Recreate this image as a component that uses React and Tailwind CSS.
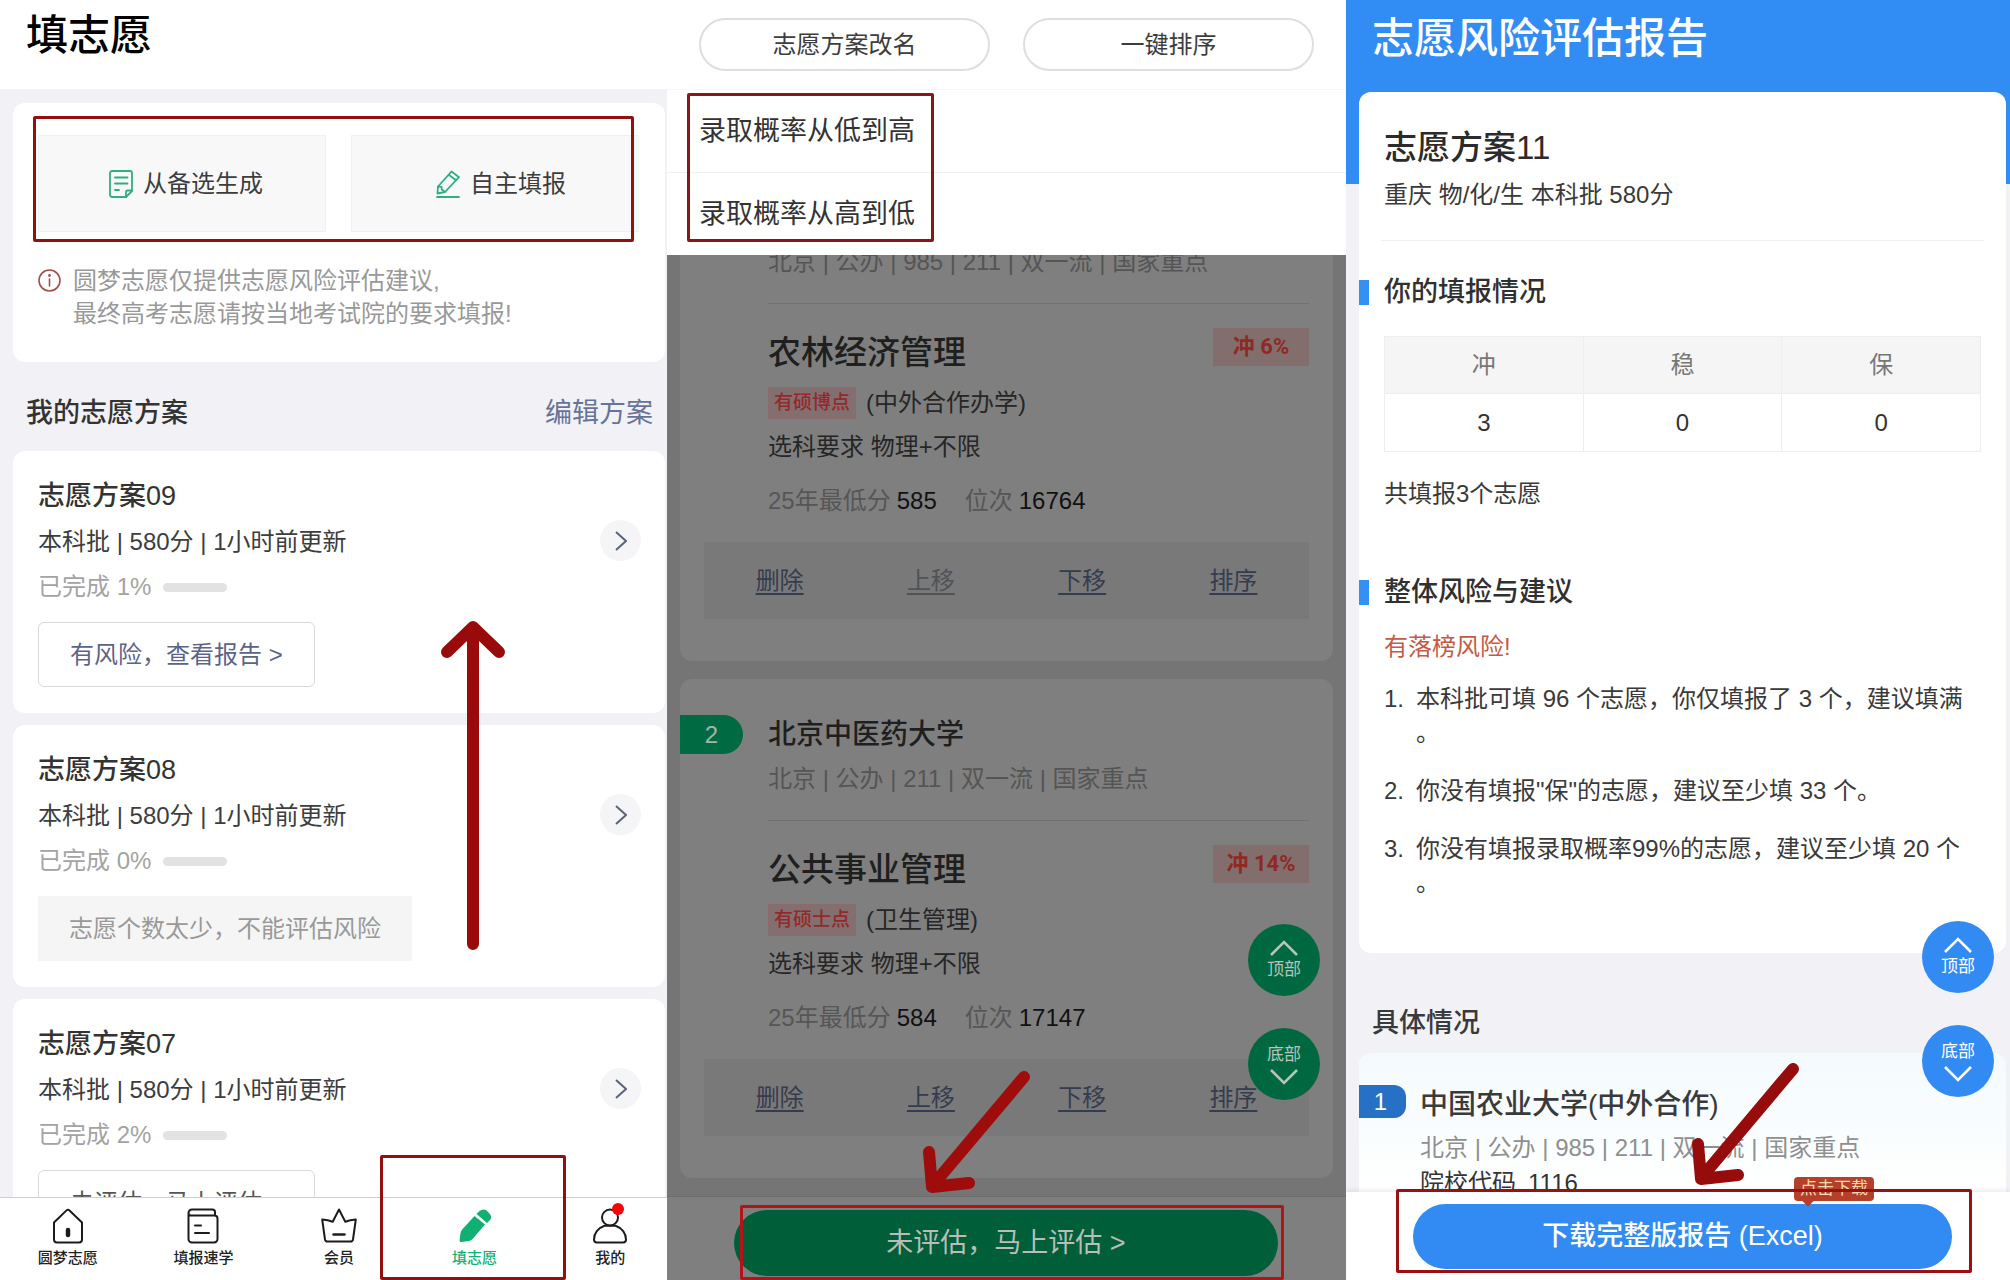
import React from "react";

const FONT = "font-['Liberation_Sans','Noto_Sans_CJK_SC',sans-serif]";

/* ---------- icons ---------- */

function DocIcon() {
  return (
    <svg aria-hidden="true" className="h-7 w-6" viewBox="0 0 24 28" fill="none" stroke="#2fae80" strokeWidth="1.8" strokeLinecap="round" strokeLinejoin="round">
      <path d="M17 27H3a2 2 0 0 1-2-2V3a2 2 0 0 1 2-2h18a2 2 0 0 1 2 2v18z" />
      <path d="M23 20.5h-4.5a1.5 1.5 0 0 0-1.5 1.5v5M6 7.500h12.500M6 13.500h12.500M6 20h4" />
    </svg>
  );
}

function WriteIcon() {
  return (
    <svg aria-hidden="true" className="h-7 w-6" viewBox="0 0 24 28" fill="none" stroke="#2fae80" strokeWidth="1.8" strokeLinecap="round" strokeLinejoin="round">
      <path d="M15.500 1.500 23 7.200 9 22 1.500 23.500 2 16.500z" />
      <path d="M12.700 4.800 20.200 10.300M2 16.500 5.500 16.800 5.800 19.500 9 22M1 27h22" />
    </svg>
  );
}

function InfoIcon() {
  return (
    <svg aria-hidden="true" className="mt-[5px] size-[23px] shrink-0" viewBox="0 0 23 23" fill="none" stroke="#a0504c" strokeWidth="1.6" strokeLinecap="round">
      <circle cx="11.500" cy="11.500" r="10.500" />
      <path d="M11.500 10v7" />
      <circle cx="11.500" cy="6.500" r="0.600" fill="#a0504c" />
    </svg>
  );
}

function Chevron({ d, className }) {
  return (
    <svg aria-hidden="true" className={className} viewBox="0 0 28 16" fill="none" stroke="currentColor" strokeWidth="2.600">
      <path d={d} />
    </svg>
  );
}

function HomeIcon() {
  return (
    <svg aria-hidden="true" className="h-9 w-9" viewBox="0 0 36 36" fill="none" stroke="#1c1c1c" strokeWidth="2" strokeLinejoin="round">
      <path d="M4 14.500 16.500 2.400a2.200 2.200 0 0 1 3 0L32 14.500V31.500a3 3 0 0 1-3 3H7a3 3 0 0 1-3-3z" />
      <path d="M18 22v5" strokeWidth="4.500" strokeLinecap="round" />
    </svg>
  );
}

function BookIcon() {
  return (
    <svg aria-hidden="true" className="h-9 w-9" viewBox="0 0 36 36" fill="none" stroke="#1c1c1c" strokeWidth="2" strokeLinecap="round" strokeLinejoin="round">
      <path d="M3.500 5a3.500 3.500 0 0 1 3.500-3.500h20.500a2.500 2.500 0 0 1 2.500 2.500v3.500H6a2.500 2.500 0 0 1-2.500-2.500zM3.500 5v26a3.500 3.500 0 0 0 3.500 3.500h22a3.500 3.500 0 0 0 3.500-3.500V10.500a3 3 0 0 0-2.500-3" />
      <path d="M10 17.500h6M10 25h14" />
    </svg>
  );
}

function CrownIcon() {
  return (
    <svg aria-hidden="true" className="h-9 w-9" viewBox="0 0 36 36" fill="none" stroke="#1c1c1c" strokeWidth="2" strokeLinecap="round" strokeLinejoin="round">
      <path d="M18 1.500 24.300 13.800Q29 12 34.800 11.500L32 31.500a2.500 2.500 0 0 1-2.500 2h-23a2.500 2.500 0 0 1-2.500-2L1.200 11.500Q7 12 11.700 13.800z" />
      <path d="M12.500 26.500h11" strokeWidth="2.400" />
    </svg>
  );
}

function PenIcon() {
  return (
    <svg aria-hidden="true" className="h-9 w-9" viewBox="0 0 36 36" fill="#0fb072">
      <path d="M17.500 8 28 16.500 16 30.500Q14.500 32.500 12 33L4 34Q2.500 34 2.600 32.500L3.500 25Q3.800 23 5 21.800z" />
      <path d="M19.500 6 22.500 3Q25.500.500 29 2L32.500 5.500Q35.500 9 33 12L30 15z" />
    </svg>
  );
}

function UserIcon() {
  return (
    <svg aria-hidden="true" className="h-9 w-9" viewBox="0 0 36 36" fill="none" stroke="#1c1c1c" strokeWidth="2" strokeLinejoin="round">
      <circle cx="18" cy="9.500" r="8" />
      <path d="M12.500 17.800h11C30 20 34 25.500 34 31.500a3 3 0 0 1-3 3H5a3 3 0 0 1-3-3c0-6 4-11.500 10.500-13.700z" />
    </svg>
  );
}

/* ---------- annotations ---------- */

function Frame({ className }) {
  return <div aria-hidden="true" className={"pointer-events-none absolute z-20 rounded-xs border-[3px] " + className} />;
}

function UpArrow() {
  return (
    <svg aria-hidden="true" className="pointer-events-none absolute left-[440px] top-[618px] z-20 h-[334px] w-[66px]" viewBox="0 0 66 334" fill="none" stroke="#990b0b" strokeWidth="12" strokeLinecap="round" strokeLinejoin="round">
      <path d="M33 326V12M7 34 33 9 59 34" />
    </svg>
  );
}

function DownArrow({ className, color }) {
  return (
    <svg aria-hidden="true" className={"pointer-events-none absolute z-20 h-[128px] w-[112px] " + className} viewBox="0 0 112 128" fill="none" stroke={color} strokeWidth="12" strokeLinecap="round" strokeLinejoin="round">
      <path d="M102 8 11 116M7 83 10 118 47 114" />
    </svg>
  );
}

/* ---------- left screen ---------- */

const PLANS = [
  { name: "志愿方案09", done: "1%", action: "有风险，查看报告 >" },
  { name: "志愿方案08", done: "0%", note: "志愿个数太少，不能评估风险" },
  { name: "志愿方案07", done: "2%", action: "未评估，马上评估 >", muted: true },
];

function PlanCard({ plan }) {
  return (
    <article className="mt-3 flex shrink-0 items-start justify-between rounded-xl bg-white pb-[26px] pl-[25px] pr-6 pt-[25px] first:mt-0">
      <div className="whitespace-nowrap text-2xl/[40px]">
        <h3 className="text-[27px]/[40px] font-medium text-[#333]">{plan.name}</h3>
        <p className="mt-[6px] text-[#3d3d3d]">本科批 | 580分 | 1小时前更新</p>
        <div className="mt-[5px] flex items-center gap-3 text-[#a3a3a3]">
          <span>已完成 {plan.done}</span>
          <span className="h-[9px] w-16 rounded-full bg-[#e2e2e2]" />
        </div>
        {plan.action ? (
          <button type="button" className={"mt-[15px] h-[65px] rounded-md border border-[#d9d9d9] px-[31px] " + (plan.muted ? "text-[#555]" : "text-[#5a6487]")}>
            {plan.action}
          </button>
        ) : (
          <p className="mt-[15px] bg-[#f5f5f5] px-[31px] text-2xl/[65px] text-[#999]">{plan.note}</p>
        )}
      </div>
      <button type="button" aria-label={plan.name} className="mt-11 flex size-[41px] items-center justify-center rounded-full bg-[#f5f5f7] text-[#5a6478]">
        <svg aria-hidden="true" className="h-5 w-3" viewBox="0 0 12 20" fill="none" stroke="currentColor" strokeWidth="2">
          <path d="M1 1 11 10 1 19" />
        </svg>
      </button>
    </article>
  );
}

const TABS = [
  { label: "圆梦志愿", Icon: HomeIcon },
  { label: "填报速学", Icon: BookIcon },
  { label: "会员", Icon: CrownIcon },
  { label: "填志愿", Icon: PenIcon, active: true },
  { label: "我的", Icon: UserIcon, dot: true },
];

function PlansScreen() {
  return (
    <section className="relative flex min-h-0 min-w-0 flex-col overflow-hidden bg-[#f1f1f6]">
      <header className="shrink-0 bg-white px-[26px] pb-[23px] pt-[6px]">
        <h1 className="text-[42px]/[60px] font-medium text-black">填志愿</h1>
      </header>
      <main className="flex min-h-0 flex-1 flex-col overflow-hidden pl-[13px] pr-[2px] pt-[14px]">
        <div className="shrink-0 rounded-xl bg-white pb-8 pl-[25px] pr-[26px] pt-8">
          <div className="grid grid-cols-2 gap-[25px] text-2xl text-[#3d3d3d]">
            <button type="button" className="flex h-[97px] items-center justify-center gap-[10px] border border-[#f0f0f0] bg-[#f8f8f8] pl-2">
              <DocIcon />
              从备选生成
            </button>
            <button type="button" className="flex h-[97px] items-center justify-center gap-[10px] border border-[#f0f0f0] bg-[#f8f8f8] pl-3">
              <WriteIcon />
              自主填报
            </button>
          </div>
          <div className="mt-8 flex gap-3 whitespace-nowrap text-2xl/[33px] text-[#999]">
            <InfoIcon />
            <p>
              圆梦志愿仅提供志愿风险评估建议,
              <br />
              最终高考志愿请按当地考试院的要求填报!
            </p>
          </div>
        </div>
        <div className="flex shrink-0 items-center justify-between pb-[18px] pl-[13px] pr-[12px] pt-[31px] text-[27px]/[40px]">
          <h2 className="font-medium text-[#333]">我的志愿方案</h2>
          <a href="#edit" className="text-[#68739a]">编辑方案</a>
        </div>
        <div className="flex flex-col">
          {PLANS.map((p) => (
            <PlanCard key={p.name} plan={p} />
          ))}
        </div>
      </main>
      <nav className="z-10 -mr-[11px] grid h-[83px] shrink-0 grid-cols-5 border-t border-[#cfcfcf] bg-white">
        {TABS.map(({ label, Icon, active, dot }) => (
          <a key={label} href={"#" + label} className={"flex flex-col items-center gap-[2px] pt-[10px] text-[15px]/[24px] font-medium " + (active ? "text-[#0fb072]" : "text-[#222]")}>
            <span className="relative">
              <Icon />
              {dot && <span className="absolute -top-[5px] right-[4px] size-3 rounded-full bg-[#fb0005]" />}
            </span>
            {label}
          </a>
        ))}
      </nav>
      <Frame className="left-[33px] right-[33px] top-[116px] h-[126px] border-[#930f10]" />
      <Frame className="bottom-0 left-[380px] h-[125px] w-[186px] border-[#930f10]" />
      <UpArrow />
    </section>
  );
}

/* ---------- middle screen ---------- */

function Jump({ up, className }) {
  return (
    <button type="button" className={"flex size-[72px] flex-col items-center justify-center gap-[3px] rounded-full text-[17px]/[22px] " + className}>
      {up && <Chevron className="h-4 w-7" d="M1 15 14 2 27 15" />}
      {up ? "顶部" : "底部"}
      {!up && <Chevron className="h-4 w-7" d="M1 1 14 14 27 1" />}
    </button>
  );
}

function Major({ name, chance, tag, note, score, rank, firstRow }) {
  return (
    <>
      <div className="ml-[88px] mr-6 whitespace-nowrap border-t border-[#717171] pt-6 text-2xl/[40px] text-[#262626]">
        <div className="flex items-start justify-between">
          <h3 className="text-[33px]/[50px] font-medium text-[#1f1f1f]">{name}</h3>
          <span className="w-[96px] bg-[#836e6e] text-center font-['Roboto','Noto_Sans_CJK_SC',sans-serif] text-[22px]/[38px] font-bold text-[#8f2a22]">冲 {chance}</span>
        </div>
        <p className="mt-[5px] flex items-center gap-[10px]">
          <span className="border border-[#8a6c6c] bg-[#836f6f] px-[5px] text-[19px]/[30px] font-medium text-[#94292a]">{tag}</span>
          <span>{note}</span>
        </p>
        <p className="mt-1">选科要求 物理+不限</p>
        <dl className="mt-[14px] flex">
          <dt className="text-[#565656]">25年最低分</dt>
          <dd className="ml-[6px] mr-7 text-[#111]">{score}</dd>
          <dt className="text-[#565656]">位次</dt>
          <dd className="ml-[6px] text-[#111]">{rank}</dd>
        </dl>
      </div>
      <div className="mx-6 mb-[42px] mt-[21px] grid h-[77px] grid-cols-4 items-center bg-[#797979] text-2xl text-[#363c4f]">
        {["删除", "上移", "下移", "排序"].map((t) => (
          <button key={t} type="button" className={"underline underline-offset-4 " + (firstRow && t === "上移" ? "text-[#505358]" : "")}>
            {t}
          </button>
        ))}
      </div>
    </>
  );
}

function SortScreen() {
  return (
    <section className="relative flex min-h-0 min-w-0 flex-col overflow-hidden bg-[#757575]">
      <header className="grid shrink-0 grid-cols-2 gap-[33px] bg-white px-8 py-[18px] text-2xl text-[#3d3d3d]">
        <button type="button" className="h-[53px] rounded-full border-2 border-[#dedede]">志愿方案改名</button>
        <button type="button" className="h-[53px] rounded-full border-2 border-[#dedede]">一键排序</button>
      </header>
      <div className="flex shrink-0 flex-col divide-y divide-[#f0f0f0] border-t border-[#f6f6f6] bg-white text-[27px]/[82px] text-[#333]">
        <button type="button" className="px-8 text-left">录取概率从低到高</button>
        <button type="button" className="px-8 text-left">录取概率从高到低</button>
      </div>
      <main className="flex min-h-0 flex-1 flex-col justify-end overflow-hidden pb-[18px] pl-[13px] pr-[13px]">
        <article className="shrink-0 rounded-b-xl bg-[#7f7f7f]">
          <p className="ml-[88px] pb-6 text-2xl/[34px] text-[#555]">北京 | 公办 | 985 | 211 | 双一流 | 国家重点</p>
          <Major name="农林经济管理" chance="6%" tag="有硕博点" note="(中外合作办学)" score="585" rank="16764" firstRow />
        </article>
        <article className="mt-[18px] shrink-0 rounded-xl bg-[#7f7f7f] pt-9">
          <div className="flex items-start pb-6">
            <span className="mr-[25px] w-[63px] rounded-r-full bg-[#006b42] text-center text-2xl/[39px] text-[#a3b5ac]">2</span>
            <div>
              <h2 className="text-[28px]/[40px] font-medium text-[#1f1f1f]">北京中医药大学</h2>
              <p className="mt-[7px] text-2xl/[34px] text-[#555]">北京 | 公办 | 211 | 双一流 | 国家重点</p>
            </div>
          </div>
          <Major name="公共事业管理" chance="14%" tag="有硕士点" note="(卫生管理)" score="584" rank="17147" />
        </article>
      </main>
      <div className="absolute bottom-[180px] right-[26px] z-10 flex flex-col gap-8">
        <Jump up className="bg-[#006840] text-[#b5c4bc]" />
        <Jump className="bg-[#006840] text-[#b5c4bc]" />
      </div>
      <footer className="shrink-0 border-t border-[#6c6c6c] bg-[#7f7f7f] pb-1 pl-[67px] pr-[68px] pt-[13px]">
        <button type="button" className="h-[66px] w-full rounded-full bg-[#005f39] text-[27px] text-[#b8bdb9]">未评估，马上评估 &gt;</button>
      </footer>
      <Frame className="left-[20px] top-[93px] h-[149px] w-[247px] border-[#8b1518]" />
      <Frame className="bottom-0 left-[73px] right-[62px] h-[75px] border-[#b31418]" />
      <DownArrow className="bottom-[83px] left-[255px]" color="#9f0c0c" />
    </section>
  );
}

/* ---------- right screen ---------- */

function SectionTitle({ children }) {
  return (
    <h2 className="flex items-center text-[27px]/[40px] font-medium text-[#303030]">
      <span className="mr-[15px] h-[25px] w-[10px] bg-[#3590f3]" />
      {children}
    </h2>
  );
}

function ReportScreen() {
  return (
    <section className="relative flex min-h-0 min-w-0 flex-col overflow-hidden bg-[#f1f1f6]">
      <div className="flex shrink-0 flex-col bg-[linear-gradient(#318cf4_184px,transparent_184px)] pl-[13px] pr-1">
        <h1 className="px-[13px] pb-[23px] pt-[9px] text-[42px]/[60px] font-medium text-white">志愿风险评估报告</h1>
        <article className="rounded-xl bg-white pb-[53px] pt-[31px] text-2xl/[34px] text-[#3a3a3a]">
          <div className="mx-[22px] border-b border-[#efefef] px-[3px] pb-[28px]">
            <h2 className="text-[33px]/[50px] font-medium text-[#2b2b2b]">志愿方案11</h2>
            <p className="mt-[5px]">重庆 物/化/生 本科批 580分</p>
          </div>
          <div className="mt-[31px]">
            <SectionTitle>你的填报情况</SectionTitle>
          </div>
          <div className="pl-[25px] pr-[25px]">
            <table className="mt-6 w-full table-fixed border-collapse border border-[#eee] text-center text-[#333]">
              <thead>
                <tr className="h-[57px] bg-[#f5f5f5] text-[#777]">
                  <th className="border border-[#eee] font-normal">冲</th>
                  <th className="border border-[#eee] font-normal">稳</th>
                  <th className="border border-[#eee] font-normal">保</th>
                </tr>
              </thead>
              <tbody>
                <tr className="h-[58px]">
                  <td className="border border-[#eee]">3</td>
                  <td className="border border-[#eee]">0</td>
                  <td className="border border-[#eee]">0</td>
                </tr>
              </tbody>
            </table>
            <p className="mt-[25px]">共填报3个志愿</p>
          </div>
          <div className="mt-[61px]">
            <SectionTitle>整体风险与建议</SectionTitle>
          </div>
          <div className="whitespace-nowrap pl-[25px]">
            <p className="mt-[18px] text-[#c45a44]">有落榜风险!</p>
            <ol className="mt-[18px] flex flex-col gap-6">
              <li className="flex">
                <span className="w-8">1.</span>
                <p>本科批可填 96 个志愿，你仅填报了 3 个，建议填满<br />。</p>
              </li>
              <li className="flex">
                <span className="w-8">2.</span>
                <p>你没有填报"保"的志愿，建议至少填 33 个。</p>
              </li>
              <li className="flex">
                <span className="w-8">3.</span>
                <p>你没有填报录取概率99%的志愿，建议至少填 20 个<br />。</p>
              </li>
            </ol>
          </div>
        </article>
      </div>
      <main className="min-h-0 flex-1 overflow-hidden pl-[13px] pr-1 pt-[50px]">
        <h2 className="px-[13px] text-[27px]/[40px] font-medium text-[#3a3a3a]">具体情况</h2>
        <article className="mt-[10px] flex items-start rounded-t-xl bg-gradient-to-b from-[#f3fafd] to-white to-60% pb-20 pt-8">
          <span className="mr-[14px] w-[47px] rounded-r-xl bg-[#2670c6] pr-1 text-center text-2xl/[33px] text-white">1</span>
          <div className="whitespace-nowrap text-2xl/[34px]">
            <h3 className="text-[28px]/[40px] font-medium text-[#3a3a3a]">中国农业大学(中外合作)</h3>
            <p className="mt-[6px] text-[#8f8f8f]">北京 | 公办 | 985 | 211 | 双一流 | 国家重点</p>
            <dl className="mt-px flex text-[#333]">
              <dt>院校代码</dt>
              <dd className="ml-3">1116</dd>
            </dl>
          </div>
        </article>
      </main>
      <div className="absolute bottom-[183px] right-4 z-10 flex flex-col gap-8">
        <Jump up className="bg-[#318bf2] text-white" />
        <Jump className="bg-[#318bf2] text-white" />
      </div>
      <footer className="relative z-10 shrink-0 bg-white pb-[11px] pl-[67px] pr-[58px] pt-3 shadow-[0_-2px_5px_rgba(0,0,0,0.08)]">
        <button type="button" className="h-[65px] w-full rounded-full bg-[#318bf2] text-[27px] font-medium text-white">下载完整版报告 (Excel)</button>
        <span className="absolute -top-[15px] right-[136px] rounded-sm bg-[#b53f2a] px-[6px] text-[17px]/[24px] text-[#f6dcae] after:absolute after:-bottom-[4px] after:left-[10px] after:size-2 after:rotate-45 after:bg-[#b53f2a] after:content-['']">
          点击下载
        </span>
      </footer>
      <Frame className="bottom-[7px] left-[50px] right-[38px] h-[84px] border-[#9c0f12]" />
      <DownArrow className="bottom-[91px] left-[345px]" color="#960b0b" />
    </section>
  );
}

export default function App() {
  return (
    <div className={"grid h-screen grid-cols-[667fr_679fr_664fr] grid-rows-1 overflow-hidden bg-white " + FONT}>
      <PlansScreen />
      <SortScreen />
      <ReportScreen />
    </div>
  );
}
